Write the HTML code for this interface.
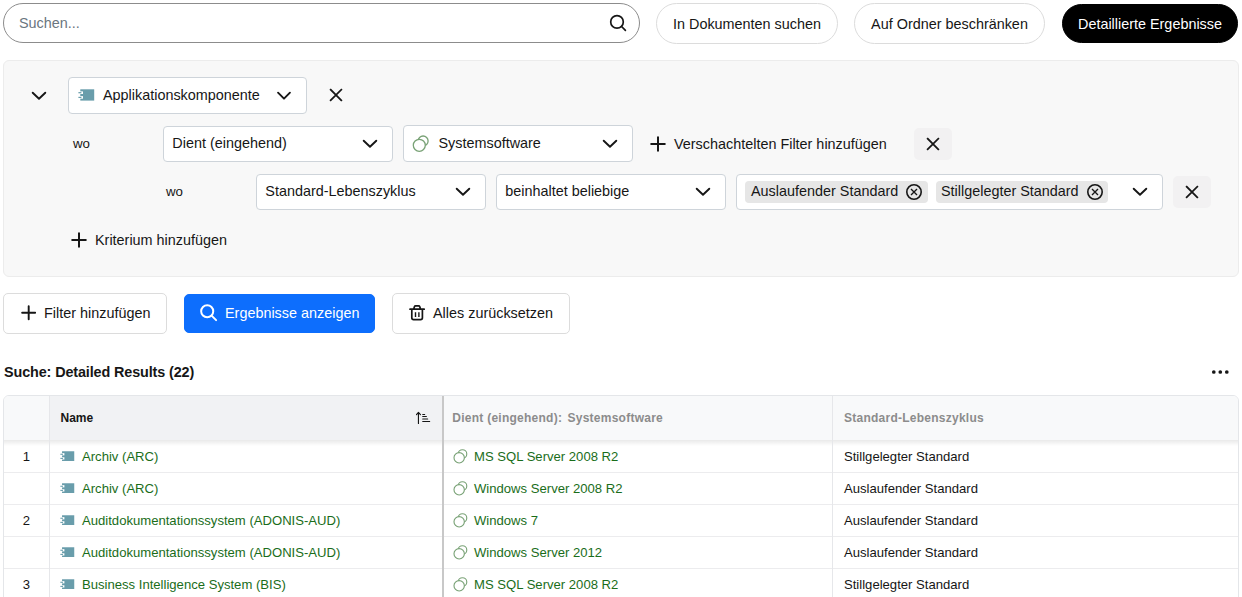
<!DOCTYPE html>
<html>
<head>
<meta charset="utf-8">
<style>
*{box-sizing:border-box;margin:0;padding:0}
html,body{width:1242px;height:597px;overflow:hidden;background:#fff}
body{font-family:"Liberation Sans",sans-serif;font-size:14.4px;color:#161616;position:relative}
.abs{position:absolute}
.ic{position:absolute;display:block}
.t{position:absolute;white-space:nowrap}
.search{left:3px;top:3px;width:637px;height:40px;border:1px solid #8c8c8c;border-radius:20px;background:#fff}
.pill{border:1px solid #dcdcdc;border-radius:21px;background:#fff;line-height:41px;text-align:center;white-space:nowrap}
.pill.dark{background:#000;border-color:#000;color:#fff}
.panel{left:3px;top:60px;width:1236px;height:217px;background:#f8f8f8;border:1px solid #ececec;border-radius:6px}
.sel{border:1px solid #ced4da;border-radius:4px;background:#fff;white-space:nowrap}
.lbl{font-size:13.3px;line-height:16px}
.xbtn{width:38px;height:32px;border-radius:5px;background:#f2f1f2}
.tag{position:absolute;top:6px;height:22px;border-radius:4px;background:#e6e6e6;line-height:21px}
.btn{border:1px solid #dcdcdc;border-radius:5px;background:#fff;line-height:39px;white-space:nowrap}
.btn.blue{background:#0d6efd;border-color:#0d6efd;color:#fff}
.title{left:4px;top:364px;font-size:14.4px;font-weight:bold;letter-spacing:-0.12px;line-height:16px;white-space:nowrap}
.table{left:3px;top:395px;width:1236px;height:210px;border:1px solid #e4e6e9;border-radius:6px 6px 0 0;background:#fff;overflow:hidden}
.th{position:absolute;top:0;height:44px;background:#f8f9fa;font-size:12px;font-weight:bold;line-height:44px;white-space:nowrap}
.row{position:absolute;left:0;width:1236px;height:32px;font-size:13.1px;line-height:33px}
.row span{position:absolute;top:0;white-space:nowrap}
.rl{position:absolute;left:0;width:1236px;height:1px;background:#ececee}
.g{color:#1a6d1a}
.num{left:0;width:45px;text-align:center}
</style>
</head>
<body>
<div class="abs search"><span class="t" style="left:15px;top:11px;color:#6b7680;line-height:17px">Suchen...</span>
<svg class="ic" style="left:604px;top:9px" width="22" height="22" viewBox="0 0 22 22" fill="none" stroke="#161616" stroke-width="1.7" stroke-linecap="round"><circle cx="9" cy="8.9" r="6.3"/><path d="M13.6 13.5 L17.4 17.3"/></svg></div>
<div class="abs pill" style="left:656px;top:3px;width:182px;height:41px">In Dokumenten suchen</div>
<div class="abs pill" style="left:854px;top:3px;width:191px;height:41px">Auf Ordner beschränken</div>
<div class="abs pill dark" style="left:1062px;top:4px;width:176px;height:39px;line-height:39px">Detaillierte Ergebnisse</div>
<div class="abs panel"></div>
<svg class="ic" style="left:30.8px;top:90.6px" width="16" height="10" viewBox="0 0 16 10" fill="none" stroke="#161616" stroke-width="1.9" stroke-linecap="round" stroke-linejoin="round"><path d="M1.70 1.7 L8 7.7 L14.30 1.7"/></svg>
<div class="abs sel" style="left:68px;top:77px;width:239px;height:37px">
<svg class="ic" style="left:8.5px;top:10.7px" width="17.00" height="12.00" viewBox="0 0 17 12"><rect x="2.3" y="0.3" width="13.9" height="11.3" fill="#699dab"/><rect x="0.9" y="2.4" width="4.1" height="2.6" fill="#fff"/><rect x="0.9" y="7.1" width="4.1" height="2.6" fill="#fff"/><rect x="0.4" y="3.1" width="3.0" height="1.2" fill="#699dab"/><rect x="0.4" y="7.8" width="3.0" height="1.2" fill="#699dab"/></svg>
<span class="t" style="left:34px;top:0;line-height:34px">Applikationskomponente</span>
<svg class="ic" style="left:207.3px;top:12.6px" width="16" height="10" viewBox="0 0 16 10" fill="none" stroke="#161616" stroke-width="1.9" stroke-linecap="round" stroke-linejoin="round"><path d="M2.05 1.7 L8 7.7 L13.95 1.7"/></svg></div>
<svg class="ic" style="left:329px;top:88px" width="14" height="14" viewBox="0 0 14 14" fill="none" stroke="#161616" stroke-width="1.8" stroke-linecap="square"><path d="M1.7 1.7 L12.3 12.3 M12.3 1.7 L1.7 12.3"/></svg>
<div class="abs lbl" style="left:73px;top:136px">wo</div>
<div class="abs sel" style="left:163px;top:126px;width:230px;height:36px"><span class="t" style="left:8.3px;top:0;line-height:33px">Dient (eingehend)</span><svg class="ic" style="left:198.1px;top:12.0px" width="16" height="10" viewBox="0 0 16 10" fill="none" stroke="#161616" stroke-width="1.9" stroke-linecap="round" stroke-linejoin="round"><path d="M1.70 1.7 L8 7.7 L14.30 1.7"/></svg></div>
<div class="abs sel" style="left:403px;top:125px;width:230px;height:37px"><svg class="ic" style="left:7px;top:8px" width="19.00" height="19.00" viewBox="0 0 19 19" fill="none" stroke="#79a276" stroke-width="1.3"><circle cx="12.1" cy="7" r="5"/><circle cx="8.3" cy="11.3" r="6" fill="#fff"/></svg><span class="t" style="left:34.5px;top:1px;line-height:33px">Systemsoftware</span><svg class="ic" style="left:198.1px;top:13.0px" width="16" height="10" viewBox="0 0 16 10" fill="none" stroke="#161616" stroke-width="1.9" stroke-linecap="round" stroke-linejoin="round"><path d="M1.70 1.7 L8 7.7 L14.30 1.7"/></svg></div>
<svg class="ic" style="left:650px;top:136px" width="16" height="16" viewBox="0 0 16 16" fill="none" stroke="#161616" stroke-width="2" stroke-linecap="round"><path d="M8 1.2 V14.8 M1.2 8 H14.8"/></svg>
<div class="abs t" style="left:674px;top:135px;line-height:18px">Verschachtelten Filter hinzufügen</div>
<div class="abs xbtn" style="left:914px;top:128px"><svg class="ic" style="left:12px;top:9px" width="14" height="14" viewBox="0 0 14 14" fill="none" stroke="#161616" stroke-width="1.8" stroke-linecap="square"><path d="M1.7 1.7 L12.3 12.3 M12.3 1.7 L1.7 12.3"/></svg></div>
<div class="abs lbl" style="left:166px;top:184px">wo</div>
<div class="abs sel" style="left:256px;top:174px;width:230px;height:36px"><span class="t" style="left:8.3px;top:0;line-height:33px">Standard-Lebenszyklus</span><svg class="ic" style="left:198.1px;top:12.0px" width="16" height="10" viewBox="0 0 16 10" fill="none" stroke="#161616" stroke-width="1.9" stroke-linecap="round" stroke-linejoin="round"><path d="M1.70 1.7 L8 7.7 L14.30 1.7"/></svg></div>
<div class="abs sel" style="left:496px;top:174px;width:230px;height:36px"><span class="t" style="left:8.3px;top:0;line-height:33px">beinhaltet beliebige</span><svg class="ic" style="left:198.1px;top:12.0px" width="16" height="10" viewBox="0 0 16 10" fill="none" stroke="#161616" stroke-width="1.9" stroke-linecap="round" stroke-linejoin="round"><path d="M1.70 1.7 L8 7.7 L14.30 1.7"/></svg></div>
<div class="abs sel" style="left:736px;top:174px;width:427px;height:36px">
<div class="tag" style="left:8px;width:183px"><span class="t" style="left:6px;top:0">Auslaufender Standard</span><svg class="ic" style="left:160px;top:2px" width="18" height="18" viewBox="0 0 18 18" fill="none" stroke="#161616" stroke-linecap="butt"><circle cx="9" cy="9" r="7.2" stroke-width="1.6"/><path stroke-width="1.35" d="M6 6 L12 12 M12 6 L6 12"/></svg></div>
<div class="tag" style="left:199px;width:172px"><span class="t" style="left:5px;top:0">Stillgelegter Standard</span><svg class="ic" style="left:150.2px;top:2px" width="18" height="18" viewBox="0 0 18 18" fill="none" stroke="#161616" stroke-linecap="butt"><circle cx="9" cy="9" r="7.2" stroke-width="1.6"/><path stroke-width="1.35" d="M6 6 L12 12 M12 6 L6 12"/></svg></div>
<svg class="ic" style="left:394.9px;top:12.0px" width="16" height="10" viewBox="0 0 16 10" fill="none" stroke="#161616" stroke-width="1.9" stroke-linecap="round" stroke-linejoin="round"><path d="M1.70 1.7 L8 7.7 L14.30 1.7"/></svg></div>
<div class="abs xbtn" style="left:1173px;top:176px"><svg class="ic" style="left:12px;top:9px" width="14" height="14" viewBox="0 0 14 14" fill="none" stroke="#161616" stroke-width="1.8" stroke-linecap="square"><path d="M1.7 1.7 L12.3 12.3 M12.3 1.7 L1.7 12.3"/></svg></div>
<svg class="ic" style="left:71px;top:232px" width="16" height="16" viewBox="0 0 16 16" fill="none" stroke="#161616" stroke-width="2" stroke-linecap="round"><path d="M8 1.2 V14.8 M1.2 8 H14.8"/></svg>
<div class="abs t" style="left:95px;top:231px;line-height:18px">Kriterium hinzufügen</div>
<div class="abs btn" style="left:3px;top:293px;width:164px;height:41px"><svg class="ic" style="left:16.6px;top:11.4px" width="15.4" height="15.4" viewBox="0 0 16 16" fill="none" stroke="#161616" stroke-width="2" stroke-linecap="round"><path d="M8 1.2 V14.8 M1.2 8 H14.8"/></svg><span class="t" style="left:40px;top:0">Filter hinzufügen</span></div>
<div class="abs btn blue" style="left:184px;top:294px;width:191px;height:39px"><svg class="ic" style="left:14.2px;top:8.3px" width="19" height="19" viewBox="0 0 22 22" fill="none" stroke="#fff" stroke-width="2.3" stroke-linecap="round"><circle cx="9.5" cy="9.5" r="7"/><path d="M14.6 14.6 L19.8 19.8"/></svg><span class="t" style="left:40px;top:-1px">Ergebnisse anzeigen</span></div>
<div class="abs btn" style="left:392px;top:293px;width:178px;height:41px"><svg class="ic" style="left:15px;top:10px" width="18" height="18" viewBox="0 0 18 18" fill="none" stroke="#161616" stroke-width="1.7" stroke-linecap="round" stroke-linejoin="round"><path d="M2 5.2 H16.2 M3.8 5.2 V13.8 Q3.8 15.6 5.6 15.6 H12.6 Q14.4 15.6 14.4 13.8 V5.2 M5.7 5.2 L6.4 2.8 Q6.7 1.9 7.7 1.9 H10.5 Q11.5 1.9 11.8 2.8 L12.5 5.2"/><path stroke-linecap="butt" stroke-width="1.4" d="M7.5 8.3 V13 M10.9 8.3 V13"/></svg><span class="t" style="left:40px;top:0">Alles zurücksetzen</span></div>
<div class="abs title">Suche: Detailed Results (22)</div>
<svg class="abs" style="left:1211px;top:369px" width="19" height="6" viewBox="0 0 19 6" fill="#161616"><circle cx="2.8" cy="3" r="1.85"/><circle cx="9.3" cy="3" r="1.85"/><circle cx="15.8" cy="3" r="1.85"/></svg>
<div class="abs table">
<div class="row" style="top:44px"><span class="num">1</span><svg class="ic" style="left:56.2px;top:10.9px" width="14.96" height="10.56" viewBox="0 0 17 12"><rect x="2.3" y="0.3" width="13.9" height="11.3" fill="#699dab"/><rect x="0.9" y="2.4" width="4.1" height="2.6" fill="#fff"/><rect x="0.9" y="7.1" width="4.1" height="2.6" fill="#fff"/><rect x="0.4" y="3.1" width="3.0" height="1.2" fill="#699dab"/><rect x="0.4" y="7.8" width="3.0" height="1.2" fill="#699dab"/></svg><span class="g" style="left:78px">Archiv (ARC)</span><svg class="ic" style="left:447.5px;top:8.1px" width="16.43" height="16.43" viewBox="0 0 19 19" fill="none" stroke="#79a276" stroke-width="1.3"><circle cx="12.1" cy="7" r="5"/><circle cx="8.3" cy="11.3" r="6" fill="#fff"/></svg><span class="g" style="left:470px">MS SQL Server 2008 R2</span><span style="left:840px">Stillgelegter Standard</span></div>
<div class="row" style="top:76px"><span class="num"></span><svg class="ic" style="left:56.2px;top:10.9px" width="14.96" height="10.56" viewBox="0 0 17 12"><rect x="2.3" y="0.3" width="13.9" height="11.3" fill="#699dab"/><rect x="0.9" y="2.4" width="4.1" height="2.6" fill="#fff"/><rect x="0.9" y="7.1" width="4.1" height="2.6" fill="#fff"/><rect x="0.4" y="3.1" width="3.0" height="1.2" fill="#699dab"/><rect x="0.4" y="7.8" width="3.0" height="1.2" fill="#699dab"/></svg><span class="g" style="left:78px">Archiv (ARC)</span><svg class="ic" style="left:447.5px;top:8.1px" width="16.43" height="16.43" viewBox="0 0 19 19" fill="none" stroke="#79a276" stroke-width="1.3"><circle cx="12.1" cy="7" r="5"/><circle cx="8.3" cy="11.3" r="6" fill="#fff"/></svg><span class="g" style="left:470px">Windows Server 2008 R2</span><span style="left:840px">Auslaufender Standard</span></div>
<div class="rl" style="top:76px"></div>
<div class="row" style="top:108px"><span class="num">2</span><svg class="ic" style="left:56.2px;top:10.9px" width="14.96" height="10.56" viewBox="0 0 17 12"><rect x="2.3" y="0.3" width="13.9" height="11.3" fill="#699dab"/><rect x="0.9" y="2.4" width="4.1" height="2.6" fill="#fff"/><rect x="0.9" y="7.1" width="4.1" height="2.6" fill="#fff"/><rect x="0.4" y="3.1" width="3.0" height="1.2" fill="#699dab"/><rect x="0.4" y="7.8" width="3.0" height="1.2" fill="#699dab"/></svg><span class="g" style="left:78px">Auditdokumentationssystem (ADONIS-AUD)</span><svg class="ic" style="left:447.5px;top:8.1px" width="16.43" height="16.43" viewBox="0 0 19 19" fill="none" stroke="#79a276" stroke-width="1.3"><circle cx="12.1" cy="7" r="5"/><circle cx="8.3" cy="11.3" r="6" fill="#fff"/></svg><span class="g" style="left:470px">Windows 7</span><span style="left:840px">Auslaufender Standard</span></div>
<div class="rl" style="top:108px"></div>
<div class="row" style="top:140px"><span class="num"></span><svg class="ic" style="left:56.2px;top:10.9px" width="14.96" height="10.56" viewBox="0 0 17 12"><rect x="2.3" y="0.3" width="13.9" height="11.3" fill="#699dab"/><rect x="0.9" y="2.4" width="4.1" height="2.6" fill="#fff"/><rect x="0.9" y="7.1" width="4.1" height="2.6" fill="#fff"/><rect x="0.4" y="3.1" width="3.0" height="1.2" fill="#699dab"/><rect x="0.4" y="7.8" width="3.0" height="1.2" fill="#699dab"/></svg><span class="g" style="left:78px">Auditdokumentationssystem (ADONIS-AUD)</span><svg class="ic" style="left:447.5px;top:8.1px" width="16.43" height="16.43" viewBox="0 0 19 19" fill="none" stroke="#79a276" stroke-width="1.3"><circle cx="12.1" cy="7" r="5"/><circle cx="8.3" cy="11.3" r="6" fill="#fff"/></svg><span class="g" style="left:470px">Windows Server 2012</span><span style="left:840px">Auslaufender Standard</span></div>
<div class="rl" style="top:140px"></div>
<div class="row" style="top:172px"><span class="num">3</span><svg class="ic" style="left:56.2px;top:10.9px" width="14.96" height="10.56" viewBox="0 0 17 12"><rect x="2.3" y="0.3" width="13.9" height="11.3" fill="#699dab"/><rect x="0.9" y="2.4" width="4.1" height="2.6" fill="#fff"/><rect x="0.9" y="7.1" width="4.1" height="2.6" fill="#fff"/><rect x="0.4" y="3.1" width="3.0" height="1.2" fill="#699dab"/><rect x="0.4" y="7.8" width="3.0" height="1.2" fill="#699dab"/></svg><span class="g" style="left:78px">Business Intelligence System (BIS)</span><svg class="ic" style="left:447.5px;top:8.1px" width="16.43" height="16.43" viewBox="0 0 19 19" fill="none" stroke="#79a276" stroke-width="1.3"><circle cx="12.1" cy="7" r="5"/><circle cx="8.3" cy="11.3" r="6" fill="#fff"/></svg><span class="g" style="left:470px">MS SQL Server 2008 R2</span><span style="left:840px">Stillgelegter Standard</span></div>
<div class="rl" style="top:172px"></div>
<div class="th" style="left:0;width:45px"></div>
<div class="th" style="left:46px;width:392px;background:#f1f2f4"><span class="t" style="left:10.5px">Name</span><svg class="ic" style="left:366px;top:15px" width="16" height="14" viewBox="0 0 16 14" fill="none" stroke="#161616" stroke-width="1.15" stroke-linecap="round" stroke-linejoin="round"><path d="M2.45 12.4 V1.5 M0.45 3.6 L2.45 1.45 L4.45 3.6"/><path stroke-width="1.05" d="M6.7 3.4 H8.7 M6.7 5.55 H10.4 M6.7 8 H11.7 M6.7 10.5 H13.7"/></svg></div>
<div class="th" style="left:440px;width:388px;color:#8c8c8c;letter-spacing:.25px"><span class="t" style="left:8.3px">Dient (eingehend):</span><span class="t" style="left:123.5px">Systemsoftware</span></div>
<div class="th" style="left:829px;width:407px;color:#8c8c8c;letter-spacing:.25px"><span class="t" style="left:11px">Standard-Lebenszyklus</span></div>
<div style="position:absolute;left:0;top:44px;width:1236px;height:6px;background:linear-gradient(rgba(0,0,0,.085),rgba(0,0,0,0))"></div>
<div style="position:absolute;left:45px;top:0;width:1px;height:210px;background:#e6e7ea"></div>
<div style="position:absolute;left:438px;top:0;width:2px;height:210px;background:#c8c8c8"></div>
<div style="position:absolute;left:828px;top:0;width:1px;height:210px;background:#e6e7ea"></div>
</div>
</body>
</html>
